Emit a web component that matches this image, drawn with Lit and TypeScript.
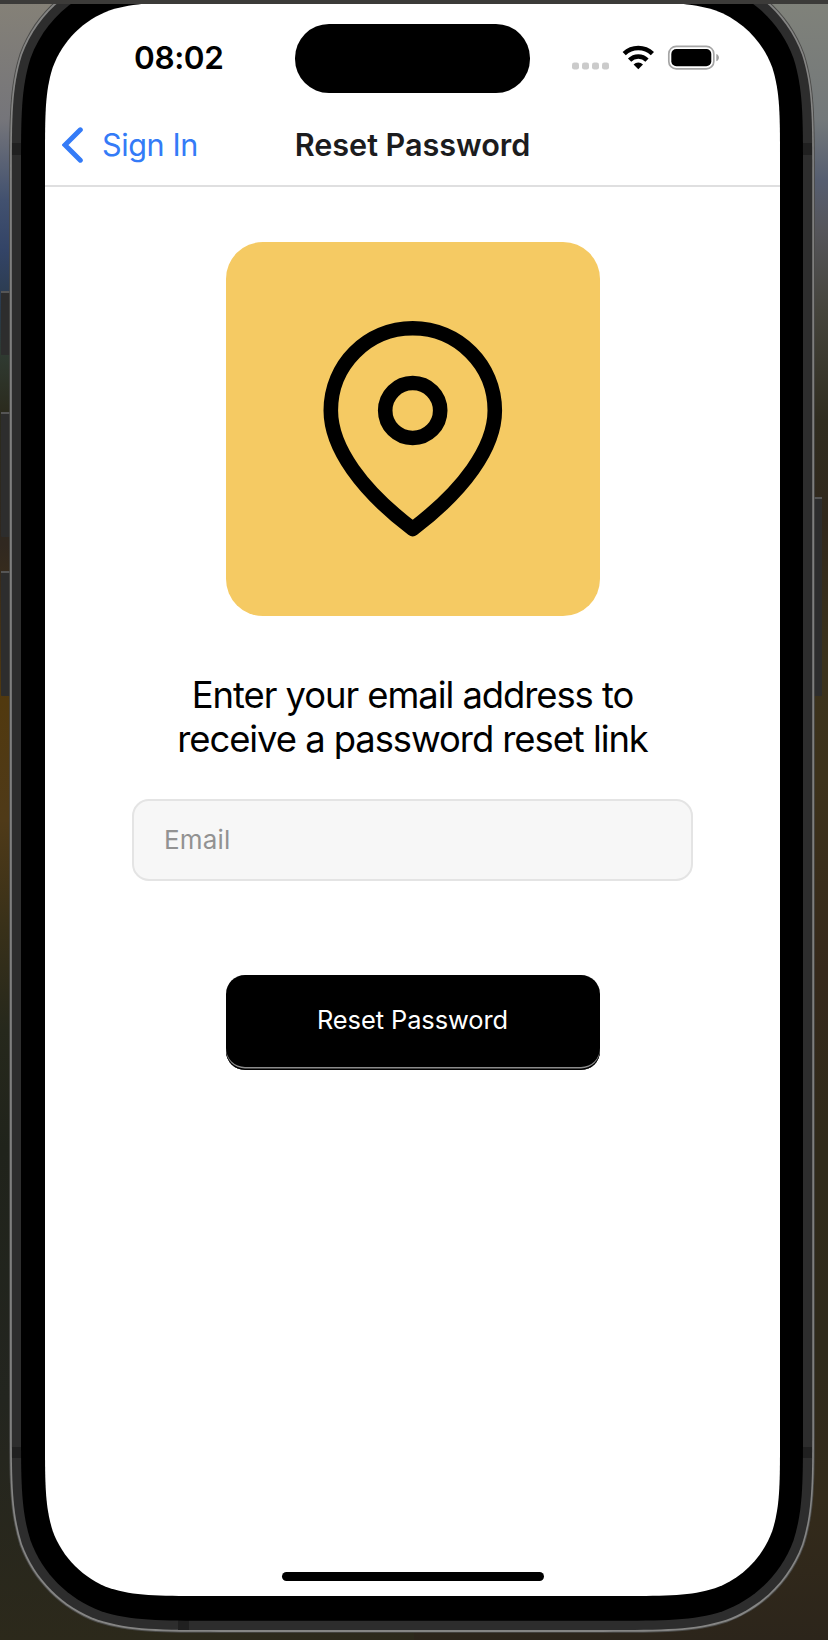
import { LitElement, html, css, svg } from "lit";
import { customElement } from "lit/decorators.js";

// Rounded rectangle with the continuous-curvature corners of the device body.
function squircle(l: number, t: number, r: number, b: number, rad: number): string {
  const a = 1.52866 * rad, c = 1.08849 * rad, d = 0.86841 * rad;
  const e = 0.63149 * rad, f = 0.07491 * rad, g = 0.37282 * rad, h = 0.16906 * rad;
  return [
    `M${l + a} ${t}H${r - a}`,
    `C${r - c} ${t} ${r - d} ${t} ${r - e} ${t + f}`,
    `C${r - g} ${t + h} ${r - h} ${t + g} ${r - f} ${t + e}`,
    `C${r} ${t + d} ${r} ${t + c} ${r} ${t + a}V${b - a}`,
    `C${r} ${b - c} ${r} ${b - d} ${r - f} ${b - e}`,
    `C${r - h} ${b - g} ${r - g} ${b - h} ${r - e} ${b - f}`,
    `C${r - d} ${b} ${r - c} ${b} ${r - a} ${b}H${l + a}`,
    `C${l + c} ${b} ${l + d} ${b} ${l + e} ${b - f}`,
    `C${l + g} ${b - h} ${l + h} ${b - g} ${l + f} ${b - e}`,
    `C${l} ${b - d} ${l} ${b - c} ${l} ${b - a}V${t + a}`,
    `C${l} ${t + c} ${l} ${t + d} ${l + f} ${t + e}`,
    `C${l + h} ${t + g} ${l + g} ${t + h} ${l + e} ${t + f}`,
    `C${l + d} ${t} ${l + c} ${t} ${l + a} ${t}Z`,
  ].join("");
}

const sideButton = (x: number, y: number, w: number, h: number) => svg`
  <rect x=${x} y=${y} width=${w} height=${h} rx="1" fill="#2d2d2d"></rect>
  <rect x=${x} y=${y} width=${w} height="2" fill="#555"></rect>`;

@customElement("device-frame")
export class DeviceFrame extends LitElement {
  static styles = css`
    :host { display: block; }
    svg { display: block; }
  `;
  render() {
    return html`<svg width="828" height="1640" viewBox="0 0 828 1640">
      ${sideButton(1, 291, 12, 64)}
      ${sideButton(1, 412, 12, 125)}
      ${sideButton(1, 571, 12, 125)}
      ${sideButton(812, 497, 10, 199)}
      <path d=${squircle(9.2, -34, 814.8, 1632.8, 138.8)} fill="#4a4a48"></path>
      <path d=${squircle(10.1, -33, 813.9, 1631.9, 138)} fill="#858584"></path>
      <path d=${squircle(11.8, -31, 812.3, 1630, 136.3)} fill="#2d2d2d"></path>
      <g fill="#202020">
        <rect x="12" y="143" width="10" height="12"></rect>
        <rect x="802" y="143" width="10" height="12"></rect>
        <rect x="12" y="1447" width="10" height="11"></rect>
        <rect x="802" y="1447" width="10" height="11"></rect>
        <rect x="178" y="1619" width="11" height="11"></rect>
      </g>
      <path d=${squircle(21, -22, 803, 1620.7, 127)} fill="#000"></path>
      <path d=${squircle(45, 2.5, 780, 1596, 103)} fill="#fff"></path>
      <rect width="828" height="4" fill="#3c3b39"></rect>
    </svg>`;
  }
}

@customElement("status-bar")
export class StatusBar extends LitElement {
  static styles = css`
    :host { display: grid; grid-template-columns: 250px 235px 250px; height: 68px; }
    .time { padding: 15px 0 0 89px; font-size: 31.5px; line-height: 38px; font-weight: 600; letter-spacing: -0.4px; color: #000; }
    .island { background: #000; border-radius: 34px; height: 69px; }
    .icons { display: block; }
  `;
  render() {
    return html`
      <div class="time">08:02</div>
      <div class="island"></div>
      <svg class="icons" width="250" height="68" viewBox="530 24 250 68">
        <g fill="#cbcbcb">
          <rect x="572" y="62.5" width="7" height="7" rx="2.3"></rect>
          <rect x="582" y="62.5" width="7" height="7" rx="2.3"></rect>
          <rect x="592" y="62.5" width="7" height="7" rx="2.3"></rect>
          <rect x="602" y="62.5" width="7" height="7" rx="2.3"></rect>
        </g>
        <g fill="none" stroke="#000" stroke-width="4.6">
          <path d="M624.2 53.6a20.4 20.4 0 0 1 28.2 0"></path>
          <path d="M629.6 60.1a12.3 12.3 0 0 1 17.4 0"></path>
        </g>
        <path d="M633.6 64.4a6.8 6.8 0 0 1 9.4 0L638.3 69.2Z" fill="#000"></path>
        <rect x="668.8" y="46.3" width="45" height="22.6" rx="7.5" fill="none" stroke="#a5a5a5" stroke-width="1.7"></rect>
        <rect x="671.3" y="49" width="40" height="17.2" rx="5" fill="#000"></rect>
        <path d="M716.3 54v7.2c3.5-1 3.5-6.2 0-7.2Z" fill="#a0a0a0"></path>
      </svg>`;
  }
}

@customElement("app-root")
export class AppRoot extends LitElement {
  static styles = css`
    :host {
      display: block; position: relative; box-sizing: border-box;
      width: 828px; height: 1640px; padding: 24px 48px 0 45px; overflow: hidden;
      font-family: Inter, "Liberation Sans", sans-serif;
      background:
        linear-gradient(#858177 0, #75757a 120px, #42516f 200px, #334467 250px, #293947 315px, #2f3a31 355px, #2b2b1e 410px, #302820 545px, #51390f 700px, #4f3a18 820px, #383019 930px, #26281c 1030px, #20231b 1150px, #23251f 1400px, #2c291b 1640px) left / 414px 100% no-repeat,
        linear-gradient(#80827a 0, #73787a 120px, #565e70 180px, #55555a 230px, #45443c 310px, #302d20 420px, #31281c 520px, #3b321c 660px, #3d321b 780px, #36291b 970px, #302a1a 1150px, #2f2a1b 1350px, #342b1b 1500px, #2c251b 1640px) right / 414px 100% no-repeat;
    }
    .frame { position: absolute; inset: 0; z-index: 0; }
    .screen { position: relative; z-index: 1; display: flex; flex-direction: column; width: 735px; height: 1572px; }
    .nav {
      display: grid; grid-template-columns: 240px 1fr 240px; align-items: center;
      height: 95px; box-sizing: border-box; padding-top: 12px; border-bottom: 2px solid #dfdfe0;
    }
    .back { display: flex; align-items: center; gap: 19px; padding-left: 17px; color: #347bf7; font-size: 30.6px; line-height: 38px; letter-spacing: -0.4px; }
    .chevron { display: block; }
    .title { font-size: 30.6px; line-height: 38px; font-weight: 600; letter-spacing: -0.05px; text-align: center; color: #1c1c1e; white-space: nowrap; margin: 0; }
    .content { display: flex; flex-direction: column; align-items: center; flex: 1; padding-top: 55px; }
    .tile { width: 374px; height: 374px; border-radius: 37px; background: #f5ca63; }
    .message { margin: 57px 0 0; font-size: 36.4px; line-height: 44.3px; letter-spacing: -1.05px; font-weight: 400; text-align: center; color: #000; white-space: nowrap; }
    .field {
      box-sizing: border-box; width: 561px; height: 82px; margin-top: 37px; padding: 0 30px;
      border: 2px solid #e4e4e4; border-radius: 17px; background: #f7f7f7; outline: none;
      font-family: inherit; font-size: 26px; letter-spacing: 0.15px; color: #000;
    }
    .field::placeholder { color: #929292; opacity: 1; }
    .submit {
      box-sizing: border-box; width: 374px; height: 95px; margin-top: 94px; padding: 0 0 5px;
      border: 0; border-radius: 19px; background: #000; color: #fff;
      font-family: inherit; font-size: 25.4px; letter-spacing: -0.05px;
      box-shadow: inset 0 -1.5px 0 #000, inset 0 -3px 0 #8c8c8c;
    }
    .home { align-self: center; width: 262px; height: 9px; margin-bottom: 15px; border-radius: 5px; background: #000; }
  `;
  render() {
    return html`
      <device-frame class="frame"></device-frame>
      <div class="screen">
        <status-bar></status-bar>
        <div class="nav">
          <div class="back">
            <svg class="chevron" width="21" height="36" viewBox="0 0 21 36"><path d="M18.3 2.8 3 18l15.3 15.2" fill="none" stroke="#347bf7" stroke-width="5" stroke-linecap="round" stroke-linejoin="miter"></path></svg>
            <span>Sign In</span>
          </div>
          <h1 class="title">Reset Password</h1>
        </div>
        <div class="content">
          <svg class="tile" viewBox="226 242 374 374">
            <g fill="none" stroke="#000" stroke-width="14.6" stroke-linejoin="round">
              <path d="M412.7 328.3C367.3 328.3 330.8 365 330.8 410.6C330.8 448 362 490.5 412.7 529C463.4 490.5 494.8 448 494.8 410.6C494.8 365 458.2 328.3 412.7 328.3Z"></path>
              <circle cx="412.7" cy="410.5" r="27.5"></circle>
            </g>
          </svg>
          <p class="message">Enter your email address to<br />receive a password reset link</p>
          <input class="field" type="email" placeholder="Email" />
          <button class="submit">Reset Password</button>
        </div>
        <div class="home"></div>
      </div>`;
  }
}
